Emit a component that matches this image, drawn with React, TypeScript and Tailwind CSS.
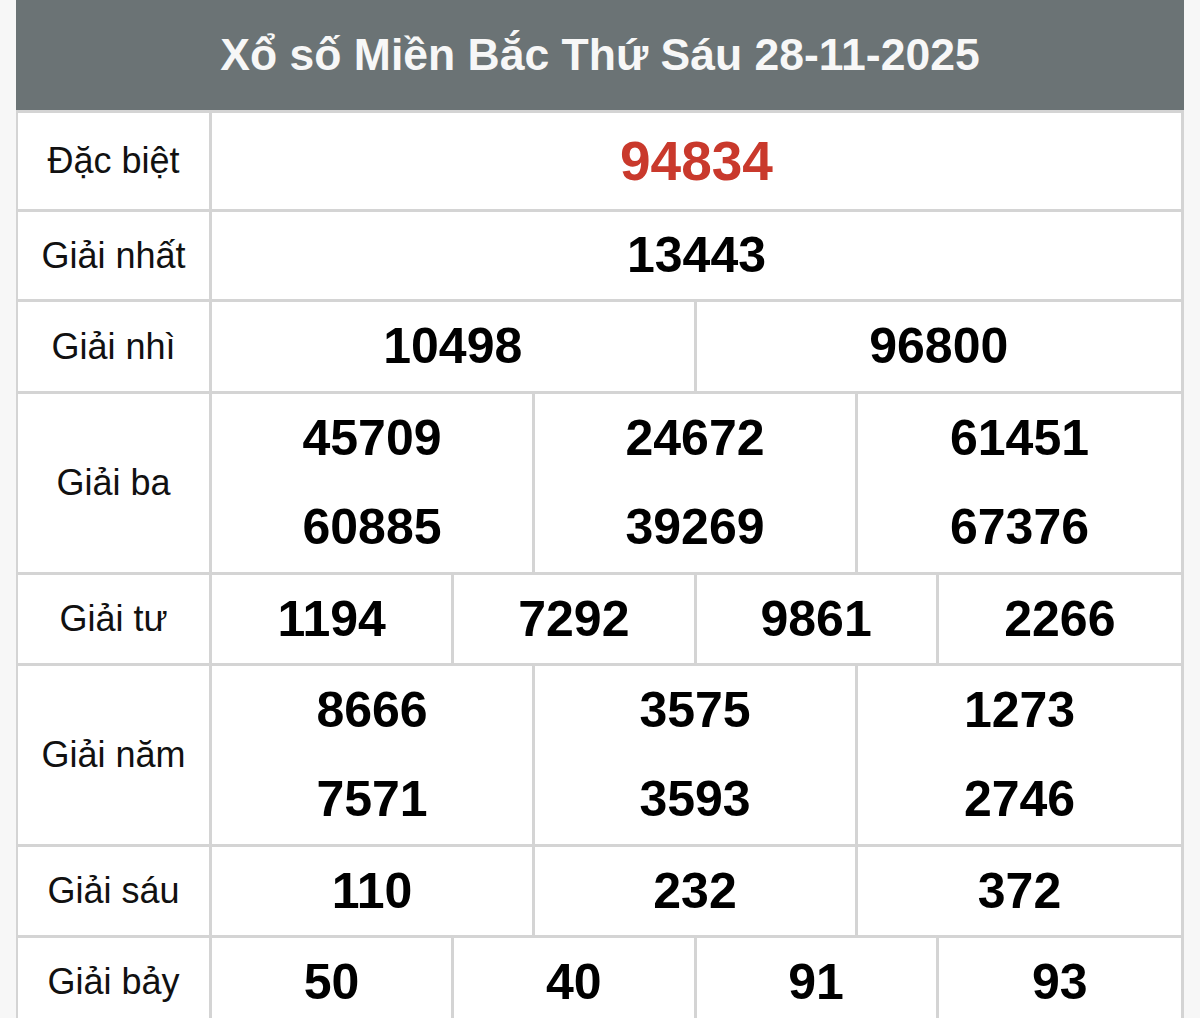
import React from 'react';

type Prize = {
  label: string;
  cols: number;
  lines?: number;
  numbers: string[];
  height: string;
  special?: boolean;
};

const prizes: Prize[] = [
  { label: 'Đặc biệt', cols: 1, numbers: ['94834'], height: 'h-[96px]', special: true },
  { label: 'Giải nhất', cols: 1, numbers: ['13443'], height: 'h-[87px]' },
  { label: 'Giải nhì', cols: 2, numbers: ['10498', '96800'], height: 'h-[89px]' },
  { label: 'Giải ba', cols: 3, lines: 2, numbers: ['45709', '24672', '61451', '60885', '39269', '67376'], height: 'h-[89px]' },
  { label: 'Giải tư', cols: 4, numbers: ['1194', '7292', '9861', '2266'], height: 'h-[88px]' },
  { label: 'Giải năm', cols: 3, lines: 2, numbers: ['8666', '3575', '1273', '7571', '3593', '2746'], height: 'h-[89px]' },
  { label: 'Giải sáu', cols: 3, numbers: ['110', '232', '372'], height: 'h-[88px]' },
  { label: 'Giải bảy', cols: 4, numbers: ['50', '40', '91', '93'], height: 'h-[88px]' },
];

const gridCols: Record<number, string> = {
  1: 'grid-cols-1',
  2: 'grid-cols-2',
  3: 'grid-cols-3',
  4: 'grid-cols-4',
};

const PrizeRow = ({ prize }: { prize: Prize }) => {
  const lines = prize.lines ?? 1;
  // numbers are listed row by row, regroup them per column
  const columns = Array.from({ length: prize.cols }, (_, c) =>
    Array.from({ length: lines }, (_, l) => prize.numbers[l * prize.cols + c])
  );

  return (
    <div className="flex border-b-[3px] border-[#d4d4d4]">
      <div className="w-[194px] shrink-0 border-r-[3px] border-[#d4d4d4] flex items-center justify-center text-[36px] text-[#111]">
        {prize.label}
      </div>
      <div className={`flex-1 grid ${gridCols[prize.cols]}`}>
        {columns.map((col, i) => (
          <div
            key={i}
            className={i < prize.cols - 1 ? 'border-r-[3px] border-[#d4d4d4] flex flex-col' : 'flex flex-col'}
          >
            {col.map((n) => (
              <div
                key={n}
                className={`${prize.height} flex items-center justify-center font-bold ${
                  prize.special ? 'text-[55px] text-[#c9392c]' : 'text-[50px] text-black'
                }`}
              >
                {n}
              </div>
            ))}
          </div>
        ))}
      </div>
    </div>
  );
};

export default function App() {
  return (
    <div className="min-h-[1018px] bg-[#f7f7f7] px-[16px] font-['Liberation_Sans',Arial,sans-serif]">
      <div className="bg-white">
        <div className="h-[110px] bg-[#6b7375] flex items-center justify-center text-[44.5px] font-bold text-[#f7f7f7]">
          Xổ số Miền Bắc Thứ Sáu 28-11-2025
        </div>
        <div className="border-t-[3px] border-l-[2px] border-r-[3px] border-[#d4d4d4]">
          {prizes.map((p) => (
            <PrizeRow key={p.label} prize={p} />
          ))}
        </div>
      </div>
    </div>
  );
}
